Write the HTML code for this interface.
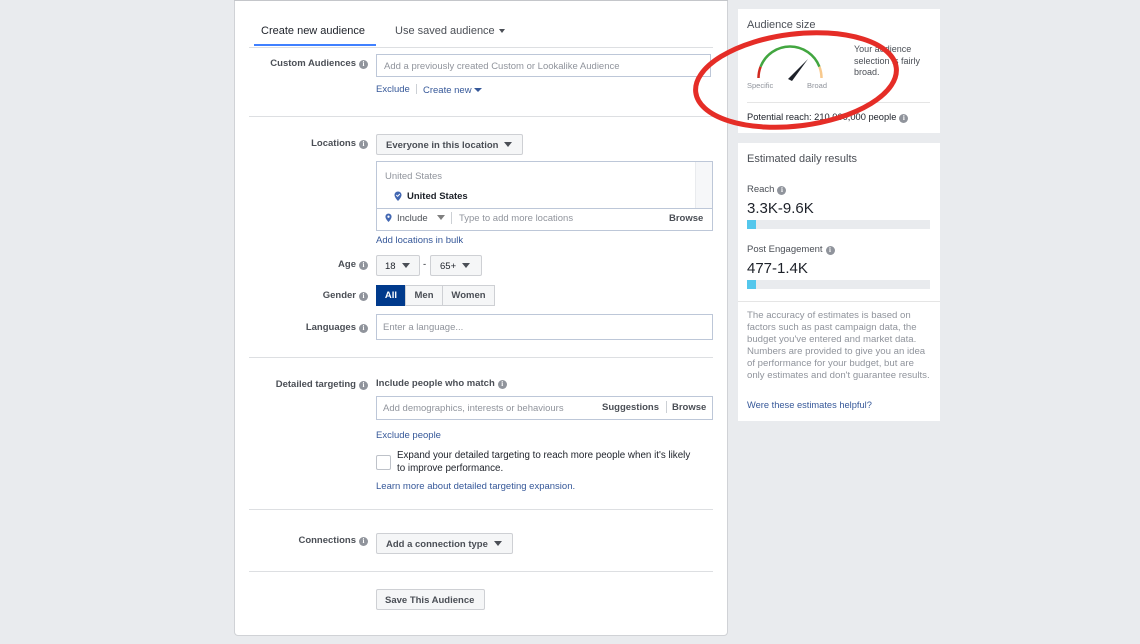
<!DOCTYPE html>
<html><head><meta charset="utf-8"><style>
*{margin:0;padding:0;box-sizing:border-box}
body{width:1140px;height:644px;background:#e9ebee;font-family:"Liberation Sans",Arial,sans-serif;position:relative;overflow:hidden;color:#1d2129}
.a{position:absolute}
.lbl{position:absolute;font-size:9.5px;font-weight:bold;color:#4b4f56;text-align:right;right:772px;white-space:nowrap}
.i{display:inline-block;width:9px;height:9px;border-radius:50%;background:#90949c;color:#fff;font-size:7px;text-align:center;line-height:9px;margin-left:3px;vertical-align:0px;font-family:"Liberation Serif",serif;font-weight:bold}
.inp{position:absolute;border:1px solid #bdc7d8;background:#fff;font-size:9.5px;color:#90949c}
.btn{position:absolute;border:1px solid #ced0d4;background:#f5f6f7;font-size:9.5px;font-weight:bold;color:#4b4f56;border-radius:2px;white-space:nowrap}
.lnk{position:absolute;font-size:9.5px;color:#365899}
.hr{position:absolute;left:249px;width:464px;height:1px;background:#dddfe2}
.tri{display:inline-block;width:0;height:0;border-left:4px solid transparent;border-right:4px solid transparent;border-top:5px solid #4b4f56;vertical-align:1px;margin-left:6px}
</style></head><body>
<div class="a" style="left:234px;top:-4px;width:494px;height:640px;background:#fff;border:1px solid #d0d2d6;border-radius:0 0 4px 4px"></div>
<div class="a" style="left:234px;top:0;width:494px;height:1px;background:#c4c6ca"></div>
<div class="a" style="left:261px;top:25px;font-size:11px;color:#1d2129">Create new audience</div>
<div class="a" style="left:254px;top:44px;width:122px;height:2px;background:#4080ff"></div>
<div class="a" style="left:395px;top:25px;font-size:11px;color:#4b4f56">Use saved audience<span class="tri" style="margin-left:4px;border-width:4px 3px 0;border-top-color:#4b4f56"></span></div>
<div class="hr" style="top:47px;left:249px"></div>
<div class="lbl" style="top:58px">Custom Audiences<span class="i">i</span></div>
<div class="inp" style="left:376px;top:54px;width:335px;height:23px;padding:6px 7px">Add a previously created Custom or Lookalike Audience</div>
<div class="lnk" style="left:376px;top:84px">Exclude</div>
<div class="a" style="left:416px;top:84px;width:1px;height:10px;background:#ccd0d5"></div>
<div class="lnk" style="left:423px;top:85px">Create new<span class="tri" style="border-top-color:#365899;margin-left:2px;border-width:4px 4px 0"></span></div>
<div class="hr" style="top:116px"></div>
<div class="lbl" style="top:138px">Locations<span class="i">i</span></div>
<div class="btn" style="left:376px;top:134px;width:147px;height:21px;padding:5px 9px">Everyone in this location<span class="tri"></span></div>
<div class="a" style="left:376px;top:161px;width:337px;height:70px;border:1px solid #bdc7d8"></div>
<div class="a" style="left:695px;top:162px;width:17px;height:46px;background:#f6f7f9;border-left:1px solid #e9ebee"></div>
<div class="a" style="left:385px;top:171px;font-size:9.5px;color:#90949c">United States</div>
<svg class="a" style="left:394px;top:191px" width="8" height="11" viewBox="0 0 8 11"><path d="M4 0.5C6 0.5 7.5 2 7.5 4C7.5 6.5 4 10 4 10C4 10 0.5 6.5 0.5 4C0.5 2 2 0.5 4 0.5Z" fill="#4267b2"/><path d="M2.3 4L3.6 5.3L5.8 3" stroke="#fff" stroke-width="1" fill="none"/></svg>
<div class="a" style="left:407px;top:191px;font-size:9.5px;font-weight:bold;color:#1d2129">United States</div>
<div class="a" style="left:376px;top:208px;width:337px;height:1px;background:#bdc7d8"></div>
<svg class="a" style="left:385px;top:213px" width="7" height="10" viewBox="0 0 8 11"><path d="M4 0.5C6 0.5 7.5 2 7.5 4C7.5 6.5 4 10 4 10C4 10 0.5 6.5 0.5 4C0.5 2 2 0.5 4 0.5Z" fill="#4267b2"/><circle cx="4" cy="4" r="1.3" fill="#fff"/></svg>
<div class="a" style="left:397px;top:213px;font-size:9.5px;color:#4b4f56">Include<span class="tri" style="margin-left:9px;border-top-color:#7f7f7f"></span></div>
<div class="a" style="left:451px;top:212px;width:1px;height:12px;background:#ccd0d5"></div>
<div class="a" style="left:459px;top:213px;font-size:9.5px;color:#90949c">Type to add more locations</div>
<div class="a" style="left:669px;top:213px;font-size:9.5px;font-weight:bold;color:#4b4f56">Browse</div>
<div class="lnk" style="left:376px;top:235px">Add locations in bulk</div>
<div class="lbl" style="top:259px">Age<span class="i">i</span></div>
<div class="btn" style="left:376px;top:255px;width:44px;height:21px;padding:5px 8px;font-weight:normal;color:#1d2129">18<span class="tri"></span></div>
<div class="a" style="left:423px;top:259px;font-size:9.5px">-</div>
<div class="btn" style="left:430px;top:255px;width:52px;height:21px;padding:5px 9px;font-weight:normal;color:#1d2129">65+<span class="tri"></span></div>
<div class="lbl" style="top:290px">Gender<span class="i">i</span></div>
<div class="a" style="left:376px;top:285px;width:30px;height:21px;background:#003a8c;color:#fff;font-size:9.5px;font-weight:bold;text-align:center;line-height:21px">All</div>
<div class="btn" style="left:405px;top:285px;width:38px;height:21px;text-align:center;line-height:19px;border-radius:0">Men</div>
<div class="btn" style="left:442px;top:285px;width:53px;height:21px;text-align:center;line-height:19px;border-radius:0">Women</div>
<div class="lbl" style="top:322px">Languages<span class="i">i</span></div>
<div class="inp" style="left:376px;top:314px;width:337px;height:26px;padding:7px 6px">Enter a language...</div>
<div class="hr" style="top:357px"></div>
<div class="lbl" style="top:379px">Detailed targeting<span class="i">i</span></div>
<div class="a" style="left:376px;top:378px;font-size:9.5px;font-weight:bold;color:#4b4f56">Include people who match<span class="i">i</span></div>
<div class="inp" style="left:376px;top:396px;width:337px;height:24px;padding:6px 6px">Add demographics, interests or behaviours</div>
<div class="a" style="left:602px;top:402px;font-size:9.5px;font-weight:bold;color:#4b4f56">Suggestions</div>
<div class="a" style="left:666px;top:401px;width:1px;height:12px;background:#ccd0d5"></div>
<div class="a" style="left:672px;top:402px;font-size:9.5px;font-weight:bold;color:#4b4f56">Browse</div>
<div class="lnk" style="left:376px;top:430px">Exclude people</div>
<div class="a" style="left:376px;top:455px;width:15px;height:15px;border:1px solid #bec2c9;border-radius:2px"></div>
<div class="a" style="left:397px;top:450px;font-size:9.8px;color:#1d2129;line-height:12.5px;width:296px">Expand your detailed targeting to reach more people when it's likely to improve performance.</div>
<div class="lnk" style="left:376px;top:481px">Learn more about detailed targeting expansion.</div>
<div class="hr" style="top:509px"></div>
<div class="lbl" style="top:535px">Connections<span class="i">i</span></div>
<div class="btn" style="left:376px;top:533px;width:137px;height:21px;padding:5px 9px">Add a connection type<span class="tri"></span></div>
<div class="hr" style="top:571px"></div>
<div class="btn" style="left:376px;top:589px;width:109px;height:21px;padding:5px 8px">Save This Audience</div>

<div class="a" style="left:738px;top:9px;width:202px;height:124px;background:#fff"></div>
<div class="a" style="left:747px;top:19px;font-size:11px;color:#4b4f56">Audience size</div>
<svg class="a" style="left:752px;top:40px" width="80" height="44" viewBox="752 40 80 44">
<path d="M758.5 78 A31.5 31.5 0 0 1 760.6 66.7" stroke="#d0281f" stroke-width="2.5" fill="none"/>
<path d="M760.6 66.7 A31.5 31.5 0 0 1 819.4 66.7" stroke="#42a640" stroke-width="2.5" fill="none"/>
<path d="M819.4 66.7 A31.5 31.5 0 0 1 821.5 78" stroke="#f8c98d" stroke-width="2.5" fill="none"/>
<path d="M788 79 L808 59 L792 81 Z" fill="#1d2129"/>
</svg>
<div class="a" style="left:747px;top:81px;font-size:7.5px;color:#90949c">Specific</div>
<div class="a" style="left:807px;top:81px;font-size:7.5px;color:#90949c">Broad</div>
<div class="a" style="left:854px;top:44px;font-size:9px;color:#4b4f56;line-height:11.5px;width:80px">Your audience selection is fairly broad.</div>
<div class="a" style="left:747px;top:102px;width:183px;height:1px;background:#e5e5e5"></div>
<div class="a" style="left:747px;top:112px;font-size:9.3px;color:#1d2129">Potential reach: 210,000,000 people<span class="i">i</span></div>

<div class="a" style="left:738px;top:143px;width:202px;height:278px;background:#fff"></div>
<div class="a" style="left:747px;top:153px;font-size:11px;color:#4b4f56">Estimated daily results</div>
<div class="a" style="left:747px;top:184px;font-size:9.5px;color:#4b4f56">Reach<span class="i">i</span></div>
<div class="a" style="left:747px;top:200px;font-size:15px;color:#1d2129">3.3K-9.6K</div>
<div class="a" style="left:747px;top:220px;width:183px;height:9px;background:#e9ebee"></div>
<div class="a" style="left:747px;top:220px;width:9px;height:9px;background:#54c7ec"></div>
<div class="a" style="left:747px;top:244px;font-size:9.5px;color:#4b4f56">Post Engagement<span class="i">i</span></div>
<div class="a" style="left:747px;top:260px;font-size:15px;color:#1d2129">477-1.4K</div>
<div class="a" style="left:747px;top:280px;width:183px;height:9px;background:#e9ebee"></div>
<div class="a" style="left:747px;top:280px;width:9px;height:9px;background:#54c7ec"></div>
<div class="a" style="left:738px;top:301px;width:202px;height:1px;background:#e5e5e5"></div>
<div class="a" style="left:747px;top:310px;font-size:9.6px;color:#90949c;line-height:12px;width:186px">The accuracy of estimates is based on factors such as past campaign data, the budget you've entered and market data. Numbers are provided to give you an idea of performance for your budget, but are only estimates and don't guarantee results.</div>
<div class="lnk" style="left:747px;top:400px;font-size:9.3px">Were these estimates helpful?</div>

<svg class="a" style="left:0;top:0" width="1140" height="644"><ellipse cx="796" cy="80" rx="101" ry="46" transform="rotate(-7 796 80)" fill="none" stroke="#e52d27" stroke-width="5"/></svg>
</body></html>
